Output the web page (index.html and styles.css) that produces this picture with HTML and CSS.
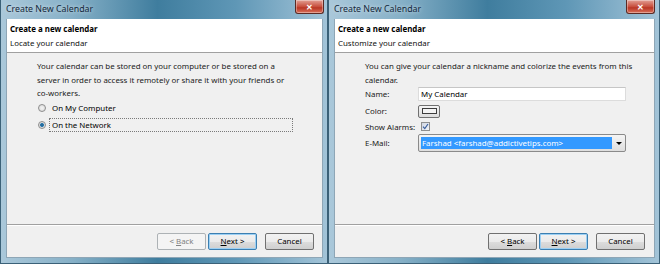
FILE: index.html
```html
<!DOCTYPE html>
<html lang="en">
<head>
    <meta charset="UTF-8">
    <title>Create New Calendar</title>
    <link rel="stylesheet" href="styles.css">
</head>
<body>
    <div class="desktop">
        <!-- paso 1: ubicacion -->
        <div class="window win-left">
            <div class="titlebar">
                <span class="title">Create New Calendar</span>
                <span class="close">&#x2715;</span>
            </div>
            <div class="client">
                <div class="header">
                    <div class="header-title">Create a new calendar</div>
                    <div class="header-sub">Locate your calendar</div>
                </div>
                <div class="body">
                    <p class="desc">Your calendar can be stored on your computer or be stored on a server in order to access it remotely or share it with your friends or co-workers.</p>
                    <div class="radio-row">
                        <span class="radio"></span>
                        <span class="radio-label">On My Computer</span>
                    </div>
                    <div class="radio-row">
                        <span class="radio checked"></span>
                        <span class="radio-label focused">On the Network</span>
                    </div>
                </div>
                <div class="footer">
                    <button class="btn disabled">&lt; <u>B</u>ack</button>
                    <button class="btn default"><u>N</u>ext &gt;</button>
                    <button class="btn cancel">Cancel</button>
                </div>
            </div>
        </div>

        <!-- paso 2: personalizar -->
        <div class="window win-right">
            <div class="titlebar">
                <span class="title">Create New Calendar</span>
                <span class="close">&#x2715;</span>
            </div>
            <div class="client">
                <div class="header">
                    <div class="header-title">Create a new calendar</div>
                    <div class="header-sub">Customize your calendar</div>
                </div>
                <div class="body">
                    <p class="desc">You can give your calendar a nickname and colorize the events from this calendar.</p>
                    <div class="form">
                        <span class="label">Name:</span>
                        <div class="textbox">My Calendar</div>
                        <span class="label">Color:</span>
                        <div><span class="color-btn"><span class="swatch"></span></span></div>
                        <span class="label">Show Alarms:</span>
                        <div><span class="checkbox">
                            <svg width="7" height="7" viewBox="0 0 7 7"><path d="M1 3.6 L2.8 5.6 L6 1" fill="none" stroke="#3a5f9e" stroke-width="1.2"/></svg>
                        </span></div>
                        <span class="label">E-Mail:</span>
                        <div class="combo">
                            <span class="combo-value">Farshad &lt;farshad@addictivetips.com&gt;</span>
                            <span class="combo-arrow"></span>
                        </div>
                    </div>
                </div>
                <div class="footer">
                    <button class="btn">&lt; <u>B</u>ack</button>
                    <button class="btn default"><u>N</u>ext &gt;</button>
                    <button class="btn cancel">Cancel</button>
                </div>
            </div>
        </div>
    </div>
</body>
</html>
```

FILE: styles.css
```css
* {
    box-sizing: border-box;
}
body {
    margin: 0;
    font-family: "Noto Sans", "Open Sans", sans-serif;
    font-size: 7.9px;
    color: #000;
    background: #2f5a73;
}
.desktop {
    display: flex;
    width: 660px;
    height: 264px;
    overflow: hidden;
}
.window {
    display: flex;
    flex-direction: column;
    height: 264px;
    padding: 0 4px 5px 5px;
    border: 1px solid #3b6178;
    border-top: none;
    background: linear-gradient(90deg, #aac8da 0%, #86b0c7 22%, #3f7d9e 48%, #5f97b6 72%, #a3c4d8 100%);
}
.win-left {
    width: 328px;
}
.win-right {
    width: 332px;
}
.titlebar {
    display: flex;
    align-items: flex-start;
    height: 19px;
    flex-shrink: 0;
}
.title {
    padding: 3px 0 0 0;
    font-size: 8.8px;
    line-height: 13px;
    color: #12283b;
    text-shadow: 0 0 4px rgba(255,255,255,0.7);
}
.close {
    margin-left: auto;
    width: 29px;
    height: 14px;
    border: 1px solid #5a2a24;
    border-top: none;
    border-radius: 0 0 3px 3px;
    background: linear-gradient(#e3a196, #c8503f 50%, #b93625 60%, #d9725c);
    color: #fff;
    font-size: 8px;
    font-weight: bold;
    line-height: 13px;
    text-align: center;
    box-shadow: inset 0 0 0 1px rgba(255,255,255,0.35);
}
.win-left .close {
    margin-right: -1px;
}
.client {
    flex: 1;
    display: flex;
    flex-direction: column;
    background: #f0f0f0;
    border: 1px solid #8ea6b6;
    border-top: none;
}
.header {
    background: #fff;
    border-bottom: 1px solid #a0a0a0;
    padding: 3px 0 2px 3px;
    line-height: 14px;
    color: #111;
}
.header-title {
    font-weight: bold;
    color: #000;
}
.body {
    flex: 1;
    padding: 7px 27px 0 30px;
}
.win-right .body {
    padding-right: 17px;
}
.desc {
    margin: 0;
    line-height: 13.5px;
    color: #1a1a1a;
}
.radio-row {
    display: flex;
    align-items: center;
    height: 14px;
    margin-top: 3px;
}
.desc + .radio-row {
    margin-top: 0;
}
.radio {
    width: 8px;
    height: 8px;
    margin: 0 3px 0 1px;
    border: 1px solid #8d8d8d;
    border-radius: 50%;
    background: radial-gradient(#f4f4f4, #d6d6d6);
    flex-shrink: 0;
}
.radio.checked {
    background: radial-gradient(circle, #1f5f8d 0, #2d79ad 1.6px, #dcdcdc 2.3px, #eaeaea);
}
.radio-label {
    flex: 1;
    height: 14px;
    line-height: 13px;
    padding-left: 2px;
    border: 1px solid transparent;
    margin-right: 2px;
}
.radio-label.focused {
    border: 1px dotted #7a7a7a;
}
.form {
    display: grid;
    grid-template-columns: 53px 1fr;
    grid-template-rows: 14px 12px 9px 18px;
    row-gap: 4px;
    align-items: center;
    margin-right: 11px;
}
.form > :nth-child(5),
.form > :nth-child(6) {
    margin-top: 2px;
}
.label {
    color: #1a1a1a;
}
.textbox {
    height: 14px;
    line-height: 13px;
    padding-left: 2px;
    border: 1px solid #dcdcdc;
    border-top-color: #c6c6c6;
    background: #fff;
}
.color-btn {
    display: flex;
    align-items: center;
    justify-content: center;
    width: 22px;
    height: 13px;
    border: 1px solid #707070;
    border-radius: 2px;
    background: linear-gradient(#f4f4f4, #dcdcdc);
}
.swatch {
    width: 15px;
    height: 6px;
    border: 1px solid #3c3c3c;
    background: #f3f3f3;
}
.checkbox {
    display: flex;
    align-items: center;
    justify-content: center;
    width: 9px;
    height: 9px;
    margin-left: 3px;
    border: 1px solid #8e8f8f;
    background: linear-gradient(135deg, #cfd6e3, #f2f4f7);
}
.combo {
    display: flex;
    height: 18px;
    padding: 2px 0 2px 2px;
    border: 1px solid #8a8a8a;
    border-radius: 2px;
    background: linear-gradient(#f5f5f5, #dedede);
}
.combo-value {
    flex: 1;
    line-height: 12px;
    padding-left: 1px;
    background: #3399ff;
    color: #fff;
}
.combo-arrow {
    width: 13px;
    position: relative;
}
.combo-arrow::after {
    content: "";
    position: absolute;
    left: 4px;
    top: 5px;
    border-left: 3px solid transparent;
    border-right: 3px solid transparent;
    border-top: 3px solid #000;
}
.footer {
    display: flex;
    justify-content: flex-end;
    gap: 2px;
    padding: 8px 8px 7px 0;
    border-top: 1px solid #a0a0a0;
    box-shadow: inset 0 1px 0 #fff;
}
.win-right .footer {
    padding-right: 9px;
}
.btn {
    width: 49px;
    height: 17px;
    padding: 0;
    font: inherit;
    line-height: 15px;
    color: #000;
    border: 1px solid #707070;
    border-radius: 2px;
    background: linear-gradient(#f2f2f2 0%, #ebebeb 50%, #dddddd 51%, #cfcfcf 100%);
}
.btn.default {
    border-color: #3c7fb1;
    box-shadow: inset 0 0 0 1px #9cd0f4;
}
.btn.disabled {
    color: #838383;
    border-color: #adb2b5;
    background: #f4f4f4;
}
.btn.cancel {
    margin-left: 6px;
}
```
